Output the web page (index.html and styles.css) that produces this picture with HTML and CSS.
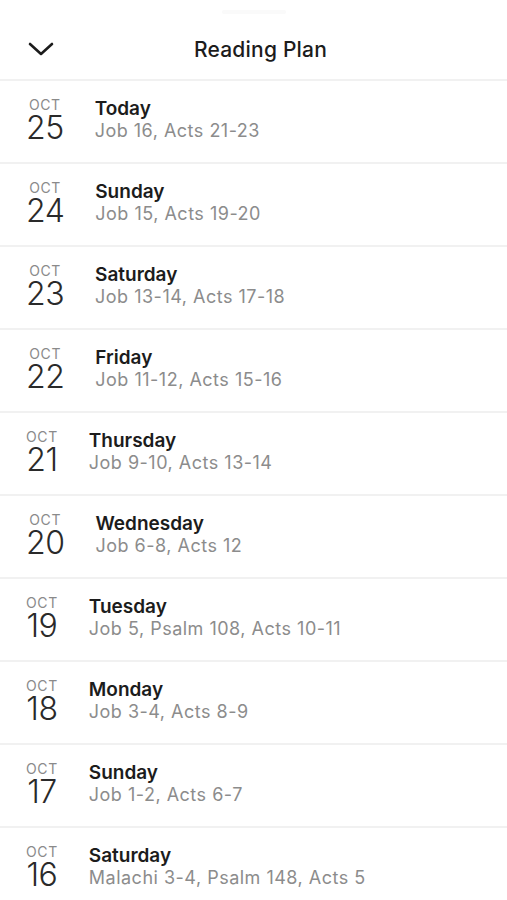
FILE: index.html
```html
<!DOCTYPE html>
<html lang="en">
<head>
<meta charset="UTF-8">
<meta name="viewport" content="width=device-width, initial-scale=1.0">
<title>Reading Plan</title>
<link rel="stylesheet" href="styles.css">
</head>
<body>
<div id="app">
  <div class="status-notch"></div>
  <div class="header">
    <svg class="back-icon" width="26" height="16" viewBox="0 0 26 16">
      <path d="M2 3 L13 13 L24 3" fill="none" stroke="#1c1c1c" stroke-width="2.6" stroke-linecap="round" stroke-linejoin="round"/>
    </svg>
    <div class="header-title">Reading Plan</div>
  </div>

  <div class="plan-list">
    <div class="plan-row">
      <div class="date"><div class="month">OCT</div><div class="day">25</div></div>
      <div class="info"><div class="info-title">Today</div><div class="info-sub">Job 16, Acts 21-23</div></div>
    </div>
    <div class="plan-row">
      <div class="date"><div class="month">OCT</div><div class="day">24</div></div>
      <div class="info"><div class="info-title">Sunday</div><div class="info-sub">Job 15, Acts 19-20</div></div>
    </div>
    <div class="plan-row">
      <div class="date"><div class="month">OCT</div><div class="day">23</div></div>
      <div class="info"><div class="info-title">Saturday</div><div class="info-sub">Job 13-14, Acts 17-18</div></div>
    </div>
    <div class="plan-row">
      <div class="date"><div class="month">OCT</div><div class="day">22</div></div>
      <div class="info"><div class="info-title">Friday</div><div class="info-sub">Job 11-12, Acts 15-16</div></div>
    </div>
    <div class="plan-row">
      <div class="date"><div class="month">OCT</div><div class="day">21</div></div>
      <div class="info"><div class="info-title">Thursday</div><div class="info-sub">Job 9-10, Acts 13-14</div></div>
    </div>
    <div class="plan-row">
      <div class="date"><div class="month">OCT</div><div class="day">20</div></div>
      <div class="info"><div class="info-title">Wednesday</div><div class="info-sub">Job 6-8, Acts 12</div></div>
    </div>
    <div class="plan-row">
      <div class="date"><div class="month">OCT</div><div class="day">19</div></div>
      <div class="info"><div class="info-title">Tuesday</div><div class="info-sub">Job 5, Psalm 108, Acts 10-11</div></div>
    </div>
    <div class="plan-row">
      <div class="date"><div class="month">OCT</div><div class="day">18</div></div>
      <div class="info"><div class="info-title">Monday</div><div class="info-sub">Job 3-4, Acts 8-9</div></div>
    </div>
    <div class="plan-row">
      <div class="date"><div class="month">OCT</div><div class="day">17</div></div>
      <div class="info"><div class="info-title">Sunday</div><div class="info-sub">Job 1-2, Acts 6-7</div></div>
    </div>
    <div class="plan-row">
      <div class="date"><div class="month">OCT</div><div class="day">16</div></div>
      <div class="info"><div class="info-title">Saturday</div><div class="info-sub">Malachi 3-4, Psalm 148, Acts 5</div></div>
    </div>
  </div>
</div>
</body>
</html>
```

FILE: styles.css
```css
body {
  margin: 0;
  font-family: Inter, "Noto Sans", sans-serif;
  background-color: #ffffff;
  color: #1c1c1c;
}

#app {
  width: 507px;
  height: 900px;
  overflow: hidden;
}

.status-notch {
  width: 64px;
  height: 4px;
  margin: 10px auto 0;
  background-color: #fafafa;
  border-radius: 2px;
}

.header {
  position: relative;
  height: 65px;
  display: flex;
  align-items: center;
  justify-content: center;
  border-bottom: 2px solid #f1f1f1;
}

.back-icon {
  position: absolute; /* sits over the centered title row */
  left: 28px;
  top: 27px;
}

.header-title {
  font-size: 21px;
  font-weight: 500;
  letter-spacing: 0.2px;
  color: #1c1c1c;
  margin-top: 6px;
  margin-left: 14px;
}

.plan-row {
  height: 81px;
  display: flex;
  align-items: center;
  gap: 31px;
  padding-left: 26px;
  border-bottom: 2px solid #f1f1f1;
}

.date {
  display: flex;
  flex-direction: column;
  align-items: center;
  margin-bottom: 2px;
}

.month {
  font-size: 14px;
  line-height: 14px;
  letter-spacing: 0.6px;
  color: #8a8a8a;
}

.day {
  font-size: 32px;
  font-weight: 300;
  line-height: 32px;
  color: #2a2a2a;
  letter-spacing: -0.5px;
}

.info {
  margin-bottom: 3px;
}

.info-title {
  font-size: 19px;
  font-weight: 600;
  line-height: 22px;
  color: #1c1c1c;
}

.info-sub {
  font-size: 18px;
  line-height: 22px;
  letter-spacing: 0.5px;
  color: #8c8c8c;
}
```
